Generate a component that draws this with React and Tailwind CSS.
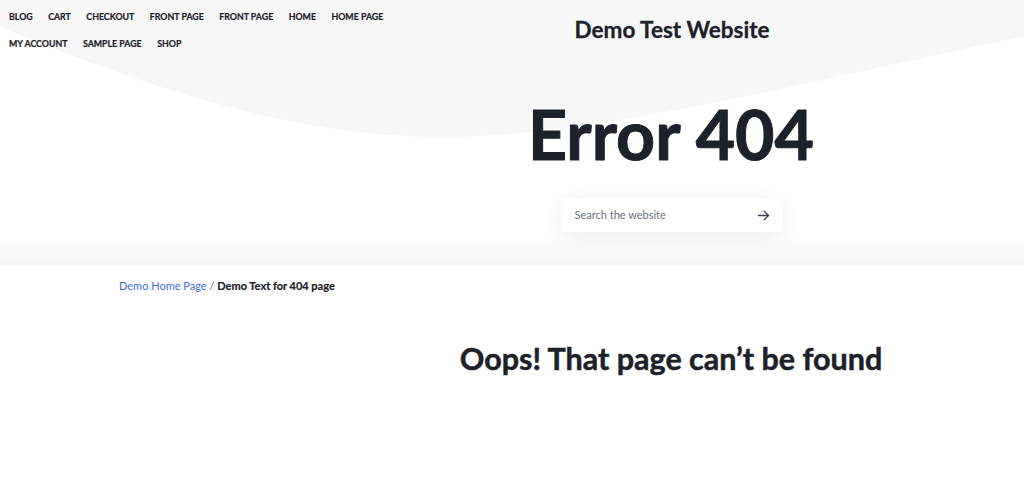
import React from "react";

const navItems = ["Blog", "Cart", "Checkout", "Front Page", "Front Page", "Home", "Home Page", "My Account", "Sample Page", "Shop"];

function ArrowRight() {
  return (
    <svg width="15" height="15" viewBox="0 0 24 24" fill="none" stroke="#3a3f4a" strokeWidth="2.2" strokeLinecap="round" strokeLinejoin="round">
      <path d="M4 12h16" />
      <path d="M13 5l7 7-7 7" />
    </svg>
  );
}

export default function App() {
  return (
    <div className="relative w-full h-[491px] bg-white text-[#1d212a] overflow-hidden" style={{ fontFamily: "Lato, 'Noto Sans', sans-serif" }}>
      <header className="relative h-[265px] overflow-hidden">
        <svg className="absolute inset-0" width="1024" height="265" viewBox="0 0 1024 265" preserveAspectRatio="none">
          <path d="M0 0 H1024 V37 C 850 70, 600 140, 430 137 C 280 135, 130 80, 0 27 Z" fill="#f7f7f7" />
        </svg>
        <div className="absolute left-0 right-0 bottom-0 h-[28px] bg-linear-to-b from-white to-[#f5f5f5]" />
        <div className="relative z-10">
          <div className="flex">
            <nav className="w-[400px] shrink-0 pl-[9px] pt-[3px] flex flex-wrap gap-x-[15.5px]">
              {navItems.map((n, i) => (
                <a key={i} className="uppercase font-bold text-[8.8px] leading-[27px] text-[#1d212a] [-webkit-text-stroke:0.2px_#1d212a]">{n}</a>
              ))}
            </nav>
            <div className="flex-1 pr-[80px] pt-[16px] flex justify-center">
              <div className="text-[22.5px] font-bold leading-[28px] [-webkit-text-stroke:0.3px_#1d212a]">Demo Test Website</div>
            </div>
          </div>
          <div className="ml-[318px] flex flex-col items-center">
            <h1 className="mt-[43px] text-[68px] font-bold leading-[68px] [-webkit-text-stroke:1px_#1d212a]">Error 404</h1>
            <div className="mt-[30px] w-[221px] h-[34px] bg-white rounded-[2px] shadow-[0_6px_24px_rgba(0,0,0,0.08)] flex items-center justify-between pl-[14px] pr-[11px]">
              <span className="text-[11px] text-[#6b7080]">Search the website</span>
              <ArrowRight />
            </div>
          </div>
        </div>
      </header>
      <main>
        <div className="pl-[119px] pt-[14px] text-[11px] leading-[14px]">
          <a className="text-[#3b6fe3]">Demo Home Page</a>
          <span className="text-[#6b7080]"> / </span>
          <span className="font-bold text-[#1d212a] [-webkit-text-stroke:0.2px_#1d212a]">Demo Text for 404 page</span>
        </div>
        <div className="ml-[318px] flex justify-center">
          <h2 className="mt-[47px] text-[30.5px] font-bold leading-[36px] [-webkit-text-stroke:0.5px_#1d212a]">Oops! That page can’t be found</h2>
        </div>
      </main>
    </div>
  );
}
